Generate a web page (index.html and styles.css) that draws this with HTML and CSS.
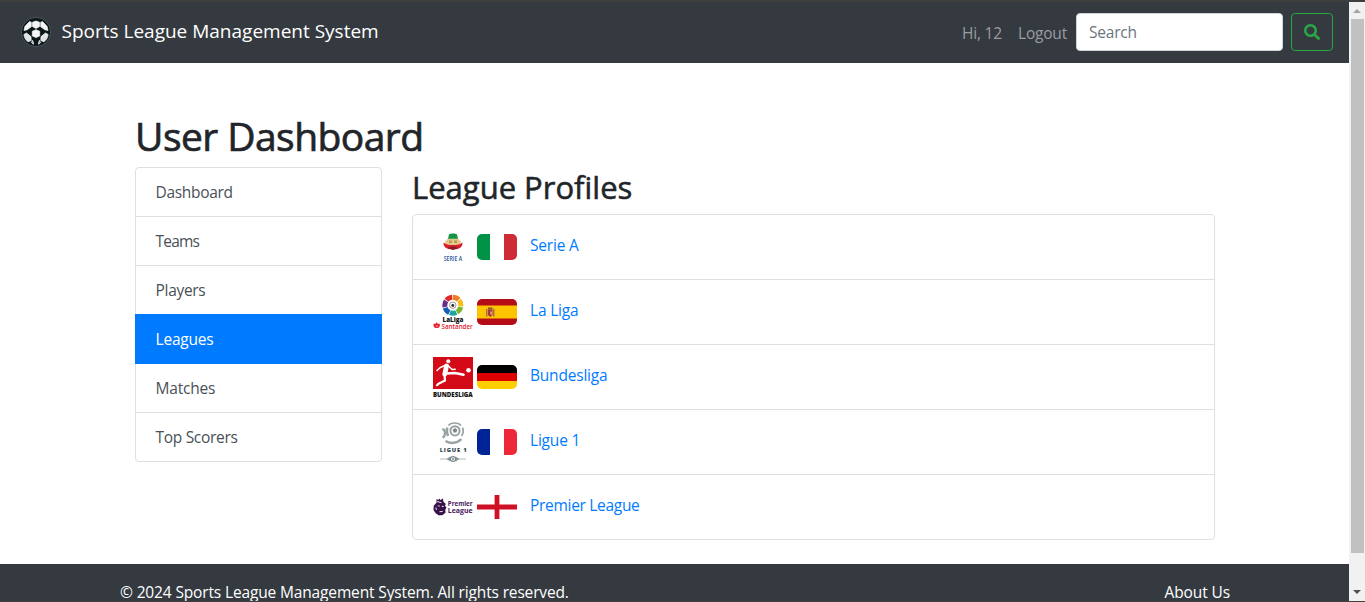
FILE: index.html
```html
<!DOCTYPE html>
<html lang="en">
<head>
<meta charset="utf-8">
<title>Sports League Management System</title>
<link rel="stylesheet" href="styles.css">
</head>
<body>
<div class="window">
  <div class="page">
    <nav class="navbar">
      <a class="brand">
        <svg class="ball" viewBox="0 0 30 30">
          <circle cx="15" cy="15" r="14.600" fill="#0d1719" stroke="#66757a" stroke-width=".6"/>
          <g fill="#f4f6f6" stroke="#f4f6f6" stroke-width=".7" stroke-linejoin="round">
            <path d="M11.500 5.300 15 4l3.500 1.300v4.300L15 11.400l-3.500-1.800z"/>
            <path d="M11.300 14.300 15 12.700l3.700 1.600v4.600L15 20.600l-3.700-1.700z"/>
            <path d="M4 9.300 8.500 4.600l1.800.7v4.500l-4.300 3-3 .7z"/>
            <path d="M26 9.300 21.500 4.600l-1.800.7v4.500l4.300 3 3 .7z"/>
            <path d="M2.900 17.500 5.500 16l4.500 3.600.2 4-3.200 1.200C4.600 22.900 3.200 20.600 2.900 17.500z" fill="#dfe4e5"/>
            <path d="M27.100 17.500 24.500 16 20 19.600l-.2 4 3.200 1.200c2.400-1.900 3.800-4.200 4.100-7.300z" fill="#dfe4e5"/>
            <path d="m10.500 25.800 1-2.500 1 2.500v1.500zM19.500 25.800l-1-2.500-1 2.500v1.500z" fill="#aab4b6"/>
          </g>
        </svg>
        <span class="brand-name">Sports League Management System</span>
      </a>
      <div class="nav-right">
        <a class="nav-link hi">Hi, 12</a>
        <a class="nav-link logout">Logout</a>
        <input class="search" type="text" placeholder="Search">
        <button class="search-btn" aria-label="Search">
          <svg viewBox="0 0 512 512" width="16" height="16"><path fill="currentColor" d="M505 442.700 405.300 343c-4.500-4.500-10.600-7-17-7H372c27.600-35.300 44-79.700 44-128C416 93.100 322.900 0 208 0S0 93.100 0 208s93.100 208 208 208c48.300 0 92.700-16.400 128-44v16.300c0 6.400 2.500 12.500 7 17l99.700 99.700c9.400 9.400 24.600 9.400 33.900 0l28.300-28.300c9.400-9.400 9.400-24.600.1-34zM208 336c-70.700 0-128-57.200-128-128 0-70.700 57.200-128 128-128 70.700 0 128 57.200 128 128 0 70.700-57.200 128-128 128z"/></svg>
        </button>
      </div>
    </nav>

    <main class="content">
      <h1><span>User Dashboard</span></h1>
      <div class="columns">
        <div class="side">
          <a class="tight"><span>Dashboard</span></a>
          <a class="tighter"><span>Teams</span></a>
          <a class="tight"><span>Players</span></a>
          <a class="active"><span>Leagues</span></a>
          <a><span>Matches</span></a>
          <a class="tight"><span>Top Scorers</span></a>
        </div>
        <section class="profiles">
          <h2><span>League Profiles</span></h2>
          <ul class="leagues">
            <li>
              <svg class="logo" viewBox="0 0 40 40">
                <path d="M12 14.500 15.500 11h9l3.500 3.500-1.500 4h-13z" fill="#e3c98b"/>
                <path d="M16 7.500c1.500-1.300 6.500-1.300 8 0l1 4.300H15z" fill="#159447"/>
                <path d="M16 13.500h3v2.500h-3zM21 13.500h3v2.500h-3z" fill="#c29a52"/>
                <path d="M10.700 15.500c2.800 3.400 15.800 3.400 18.600 0 .9 3.700-2.300 7-9.300 7s-10.200-3.300-9.300-7z" fill="#d6202b"/>
                <path d="M14.500 21 20 19.200l5.500 1.800-5.500 2z" fill="#871f25"/>
                <text x="10.700" y="34.200" textLength="18.500" lengthAdjust="spacingAndGlyphs" class="logo-text" font-size="6.200" fill="#2b5296">SERIE A</text>
              </svg>
              <svg class="flag" viewBox="0 0 40 26" style="height:26px"><path fill="#009246" d="M0 0h13.500v26H0z"/><path fill="#fff" d="M13 0h14v26H13z"/><path fill="#ce2b37" d="M27 0h13v26H27z"/></svg>
              <a>Serie A</a>
            </li>
            <li>
              <svg class="logo" viewBox="0 0 40 40">
                <g fill="none" stroke-width="5" transform="translate(0 .7) rotate(-90 19.800 12.500)">
                  <circle cx="19.800" cy="12.500" r="8" stroke="#f07b22" pathLength="70" stroke-dasharray="9 61"/>
                  <circle cx="19.800" cy="12.500" r="8" stroke="#f7bd18" pathLength="70" stroke-dasharray="9 61" stroke-dashoffset="-10"/>
                  <circle cx="19.800" cy="12.500" r="8" stroke="#79b52c" pathLength="70" stroke-dasharray="9 61" stroke-dashoffset="-20"/>
                  <circle cx="19.800" cy="12.500" r="8" stroke="#1aa3a0" pathLength="70" stroke-dasharray="9 61" stroke-dashoffset="-30"/>
                  <circle cx="19.800" cy="12.500" r="8" stroke="#1560b0" pathLength="70" stroke-dasharray="9 61" stroke-dashoffset="-40"/>
                  <circle cx="19.800" cy="12.500" r="8" stroke="#652d86" pathLength="70" stroke-dasharray="9 61" stroke-dashoffset="-50"/>
                  <circle cx="19.800" cy="12.500" r="8" stroke="#e12b2b" pathLength="70" stroke-dasharray="9 61" stroke-dashoffset="-60"/>
                </g>
                <circle cx="19.800" cy="13.200" r="4.500" fill="#fff"/>
                <circle cx="19.800" cy="13.200" r="3.200" fill="#fff" stroke="#555" stroke-width=".6"/>
                <path d="m19.800 11.700 1.600 1.200-.6 1.800h-2l-.6-1.800z" fill="#222"/>
                <text x="9.500" y="29.500" textLength="21" lengthAdjust="spacingAndGlyphs" class="logo-text heavy" font-size="6.800" fill="#111">LaLiga</text>
                <path d="M3.600 30.200 5 32l1.500-.5c1 2.500 0 4.600-2.800 4.600S0 34 .8 31.500l1.500.5z" fill="#e3202d"/>
                <path d="M2.700 34.100h2.200" stroke="#fff" stroke-width=".7"/>
                <text x="8.500" y="36.600" textLength="31.300" lengthAdjust="spacingAndGlyphs" class="logo-text" font-size="6.400" fill="#e3202d">Santander</text>
              </svg>
              <svg class="flag" viewBox="0 0 40 26" style="height:26px"><path fill="#b50d17" d="M0 0h40v26H0z"/><path fill="#ffc400" d="M0 6.500h40v13H0z"/><path d="M9 10h1.500v7.500H9zM16 10h1.500v7.500H16z" fill="#9b735e"/><path d="M11 10.500h4.500v5.500l-2.200 2-2.300-2z" fill="#b43139"/><path d="M11 8.500h4.500v2H11z" fill="#875b36"/><path d="M13.200 12.500H15v3h-1.800z" fill="#d8a46b"/></svg>
              <a>La Liga</a>
            </li>
            <li>
              <svg class="logo" viewBox="0 0 40 40">
                <path fill="#d30b18" d="M0 0h40v32H0z"/>
                <g fill="none" stroke="#fff" stroke-linecap="round" stroke-linejoin="round">
                  <path d="m13.500 9-1.700 8" stroke-width="4.800"/>
                  <path d="m13 8-5.700 2.500L4 13.500M15 8.500l4 4 3.200-.2" stroke-width="1.500"/>
                  <path d="M13 16.500 22 16l8.500 1.700" stroke-width="2.600"/>
                  <path d="m11.500 18 .5 5.500-6.500 3.200-1.500 1.500" stroke-width="2.200"/>
                </g>
                <circle cx="15.300" cy="4.300" r="2" fill="#fff"/><circle cx="35.500" cy="13.200" r="2.300" fill="#fff"/>
                <text x="0" y="39.600" textLength="39.800" lengthAdjust="spacingAndGlyphs" class="logo-text heavy" font-size="6.200" fill="#111">BUNDESLIGA</text>
              </svg>
              <svg class="flag" viewBox="0 0 40 24" style="height:24px"><path d="M0 0h40v8H0z"/><path fill="#d00" d="M0 8h40v8H0z"/><path fill="#ffce00" d="M0 16h40v8H0z"/></svg>
              <a>Bundesliga</a>
            </li>
            <li>
              <svg class="logo" viewBox="0 0 40 40">
                <g fill="none" stroke="#98a2a5">
                  <circle cx="22" cy="8.800" r="4.600" stroke-width="2"/>
                  <path d="M15.500 3.500C18 .3 25 0 28 3.500M29.500 5.500c1.300 3 .8 6-1 8.500" stroke-width="1.700"/>
                  <path d="M9.300 7.200c3.500.3 3.500 6.800.3 8.600" stroke-width="2.200"/>
                  <path d="M14.300 5.500c-.9 3-.5 6 .9 8.500M12.500 19c4.500 3 11.500 2.500 16-1.800" stroke-width="2.500"/>
                </g>
                <path d="m22 6 2.300 1.800-.9 2.800h-2.800l-.9-2.800z" fill="#7c8587"/>
                <text x="6.700" y="29.700" textLength="27" class="logo-text heavy" font-size="5.800" fill="#34464d">LIGUE 1</text>
                <path d="M7 37h8M25 37h8" stroke="#a1aaad" stroke-width=".8"/>
                <path d="M13.500 37 17 34.800h6l3.500 2.200-3.500 2.200h-6z" fill="#89959a"/>
                <circle cx="20" cy="37" r="2.500" fill="#fff" stroke="#526168" stroke-width=".8"/>
                <path d="M19 37h2M20 35.500v3" stroke="#526168" stroke-width=".7"/>
              </svg>
              <svg class="flag" viewBox="0 0 40 26" style="height:26px"><path fill="#002395" d="M0 0h13.500v26H0z"/><path fill="#fff" d="M13 0h14v26H13z"/><path fill="#ed2939" d="M27 0h13v26H27z"/></svg>
              <a>Ligue 1</a>
            </li>
            <li>
              <svg class="logo" viewBox="0 0 40 40">
                <path d="m3.500 12 1.800 1 1-1.600L7.500 13l2.500-1.500.3 3 2.500 2.600-.8 1.700 1.500 2-1.200 1.700.2 3.200-3.200 2.600H5.500l-2.800-2L.5 23l.2-4.200 2.800-3z" fill="#38104a"/>
                <path d="m4 14.500 4.500 1.200M8.700 19.300l2 .2M6.500 24.700l3.200-.2M2.800 20.500l.7 2.500" stroke="#fff" stroke-width=".9"/>
                <path d="m4.500 18.800 2.500.3" stroke="#fff" stroke-width=".7"/>
                <text x="14.800" y="18.900" textLength="24.800" lengthAdjust="spacingAndGlyphs" class="logo-text bold" font-size="7.200" fill="#48205a">Premier</text>
                <text x="14.800" y="25.800" textLength="24.800" lengthAdjust="spacingAndGlyphs" class="logo-text bold" font-size="7.200" fill="#48205a">League</text>
              </svg>
              <svg class="flag" viewBox="0 0 40 24" style="height:24px"><path fill="#fff" d="M0 0h40v24H0z"/><path fill="#ce1124" d="M17.600 0h4.800v24h-4.800zM0 9.600h40v4.800H0z"/></svg>
              <a class="tight">Premier League</a>
            </li>
          </ul>
        </section>
      </div>
    </main>

    <footer class="footer">
      <span class="copy">© 2024 Sports League Management System. All rights reserved.</span>
      <a class="about">About Us</a>
    </footer>
  </div>
  <div class="scrollbar">
    <i class="up"></i>
    <div class="thumb"></div>
    <i class="down"></i>
  </div>
</div>
</body>
</html>
```
FILE: styles.css
```css
* { box-sizing: border-box; }
body {
  margin: 0;
  overflow: hidden;
  background: #fff;
  color: #212529;
  font: 15.500px/24px "Open Sans", "Noto Sans", sans-serif;
  letter-spacing: -.2px;
}
.window {
  display: flex;
  width: 1365px;
  height: 602px;
  border-top: 2px solid #3f3f3f;
  border-bottom: 1px solid #3f3f3f;
  overflow: hidden;
}
.page { width: 1349px; display: flex; flex-direction: column; }
.navbar {
  height: 61px;
  flex: none;
  background: #343a40;
  display: flex;
  justify-content: space-between;
  align-items: center;
  padding: 0 16px 1px 21px;
}
.brand { display: flex; align-items: center; gap: 10.500px; color: #fff; font-size: 19px; letter-spacing: 0; white-space: nowrap; }
.ball { width: 30px; height: 30px; }
.brand-name { padding-bottom: 2px; }
.nav-right { display: flex; align-items: center; }
.nav-link { color: #9a9da0; white-space: nowrap; padding-top: 2px; }
.hi { width: 56px; }
.logout { width: 58px; }
.search {
  width: 207px;
  height: 38px;
  border: 1px solid #ced4da;
  border-radius: 4px;
  padding: 6px 12px;
  margin-right: 8px;
  background: #fff;
  font: inherit;
  letter-spacing: inherit;
}
.search::placeholder { color: #6c757d; opacity: 1; }
.search-btn {
  width: 42px;
  height: 38px;
  padding: 0;
  display: flex;
  align-items: center;
  justify-content: center;
  border: 1px solid #28a745;
  border-radius: 4px;
  color: #28a745;
  background: transparent;
}
.content { height: 501px; flex: none; padding: 49px 134px 0 135px; }
h1, h2 { margin: 0; font-weight: 500; white-space: nowrap; -webkit-text-stroke: .7px #212529; }
h1 { height: 55px; font-size: 39px; line-height: 48px; letter-spacing: -.55px; }
h2 { height: 47px; font-size: 31px; line-height: 40px; letter-spacing: 0; -webkit-text-stroke-width: .55px; }
.columns { display: flex; gap: 30px; align-items: flex-start; }
.side { width: 247px; border: 1px solid #dfdfdf; border-radius: 4px; }
.side a {
  display: block;
  height: 49px;
  padding: 12px 19.500px;
  color: #495057;
  border-bottom: 1px solid #dfdfdf;
}
.side a:last-child { height: 48px; border-bottom: 0; }
.side .active {
  height: 50px;
  margin: -1px -1px 0;
  padding: 13px 20.500px;
  background: #007bff;
  border-color: #007bff;
  color: #fff;
}
.tight { letter-spacing: -.3px; }
.tighter { letter-spacing: -.8px; }
.profiles { width: 803px; }
.leagues { margin: 0; padding: 0; list-style: none; border: 1px solid #dfdfdf; border-radius: 4px; }
.leagues li {
  height: 65px;
  display: flex;
  align-items: center;
  padding: 0 20px;
  border-bottom: 1px solid #dfdfdf;
}
.leagues li:last-child { height: 64px; border-bottom: 0; }
.logo { width: 40px; height: 40px; margin-right: 4px; overflow: visible; }
.flag { width: 40px; border-radius: 5px; margin-right: 13px; }
li:last-child .flag { border-radius: 0; }
.leagues a { color: #007bff; padding-bottom: 4px; white-space: nowrap; }
.logo-text { font-family: "Open Sans", sans-serif; font-weight: 600; letter-spacing: 0; }
.bold { font-weight: 700; }
.heavy { font-weight: 800; }
.footer {
  height: 80px;
  flex: none;
  background: #343a40;
  color: #fff;
  display: flex;
  justify-content: space-between;
  align-items: flex-start;
  padding: 16px 119px 0 120px;
}
.copy { letter-spacing: -.145px; }
.about { letter-spacing: -.1px; }
.scrollbar {
  width: 16px;
  background: #f1f1f1;
  display: flex;
  flex-direction: column;
  align-items: center;
}
.up, .down { width: 0; height: 0; border: 4px solid transparent; border-top: 0; border-bottom-color: #a3a3a3; margin: 7px 0 6px; }
.thumb { width: 13px; height: 534px; background: #c1c1c1; }
.down { border: 4px solid transparent; border-bottom: 0; border-top-color: #505050; margin: 37px 0 0; }
```
